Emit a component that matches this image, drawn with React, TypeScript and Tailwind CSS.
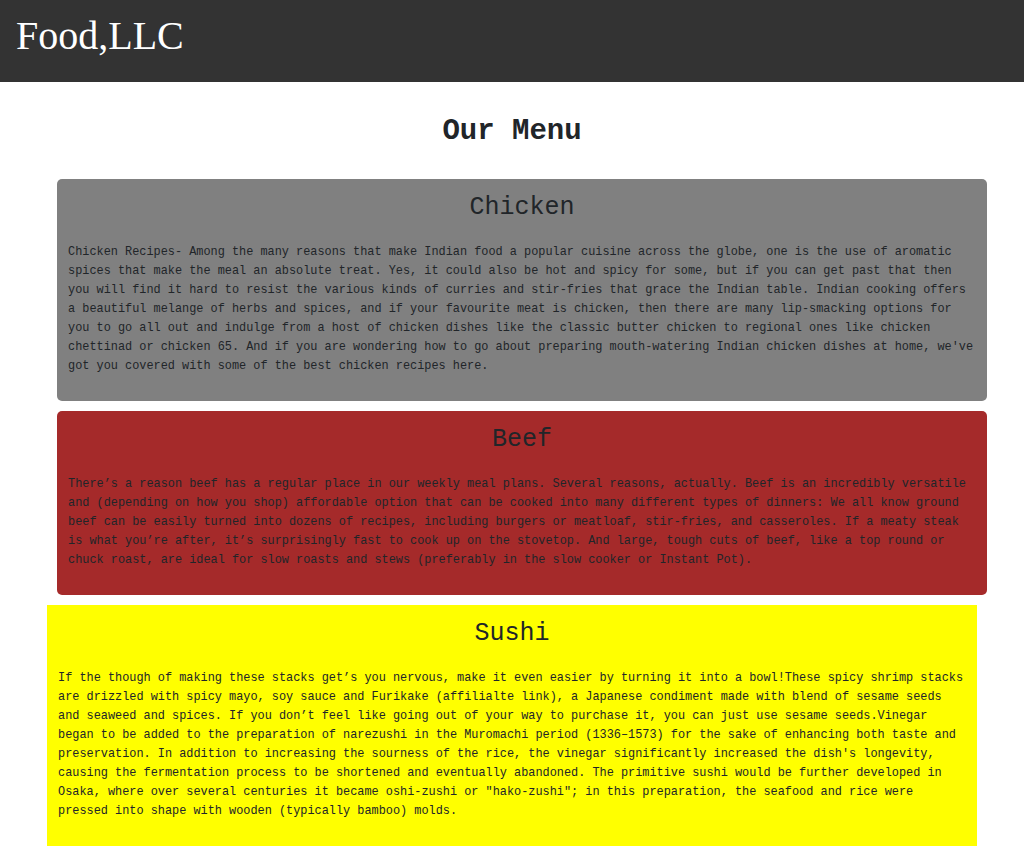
import React from "react";

const mono = { fontFamily: '"Liberation Mono", "DejaVu Sans Mono", monospace' };

const chicken = [
  "Chicken Recipes- Among the many reasons that make Indian food a popular cuisine across the globe, one is the use of aromatic",
  "spices that make the meal an absolute treat. Yes, it could also be hot and spicy for some, but if you can get past that then",
  "you will find it hard to resist the various kinds of curries and stir-fries that grace the Indian table. Indian cooking offers",
  "a beautiful melange of herbs and spices, and if your favourite meat is chicken, then there are many lip-smacking options for",
  "you to go all out and indulge from a host of chicken dishes like the classic butter chicken to regional ones like chicken",
  "chettinad or chicken 65. And if you are wondering how to go about preparing mouth-watering Indian chicken dishes at home, we've",
  "got you covered with some of the best chicken recipes here.",
];

const beef = [
  "There’s a reason beef has a regular place in our weekly meal plans. Several reasons, actually. Beef is an incredibly versatile",
  "and (depending on how you shop) affordable option that can be cooked into many different types of dinners: We all know ground",
  "beef can be easily turned into dozens of recipes, including burgers or meatloaf, stir-fries, and casseroles. If a meaty steak",
  "is what you’re after, it’s surprisingly fast to cook up on the stovetop. And large, tough cuts of beef, like a top round or",
  "chuck roast, are ideal for slow roasts and stews (preferably in the slow cooker or Instant Pot).",
];

const sushi = [
  "If the though of making these stacks get’s you nervous, make it even easier by turning it into a bowl!These spicy shrimp stacks",
  "are drizzled with spicy mayo, soy sauce and Furikake (affilialte link), a Japanese condiment made with blend of sesame seeds",
  "and seaweed and spices. If you don’t feel like going out of your way to purchase it, you can just use sesame seeds.Vinegar",
  "began to be added to the preparation of narezushi in the Muromachi period (1336–1573) for the sake of enhancing both taste and",
  "preservation. In addition to increasing the sourness of the rice, the vinegar significantly increased the dish's longevity,",
  "causing the fermentation process to be shortened and eventually abandoned. The primitive sushi would be further developed in",
  "Osaka, where over several centuries it became oshi-zushi or \"hako-zushi\"; in this preparation, the seafood and rice were",
  "pressed into shape with wooden (typically bamboo) molds.",
];

function Card({ title, lines, className }: { title: string; lines: string[]; className: string }) {
  return (
    <section className={`w-[930px] pt-[14px] pb-[25px] px-[11px] text-[#212529] ${className}`} style={mono}>
      <h2 className="text-center text-[25px] leading-[30px] font-normal">{title}</h2>
      <p className="mt-[20px] text-[11.88px] leading-[19px] whitespace-nowrap">
        {lines.map((l, i) => (
          <React.Fragment key={i}>
            {l}
            {i < lines.length - 1 && <br />}
          </React.Fragment>
        ))}
      </p>
    </section>
  );
}

export default function App() {
  return (
    <div className="w-[1024px] h-[846px] overflow-hidden bg-white">
      <header className="h-[82px] bg-[#333333] pl-[16px] pt-[13px]">
        <h1
          className="text-white text-[40px] leading-[46px] font-normal"
          style={{ fontFamily: '"Liberation Serif", "Times New Roman", serif' }}
        >
          Food,LLC
        </h1>
      </header>
      <main className="flex flex-col">
        <h1
          className="mt-[32px] text-center text-[29px] leading-[35px] font-bold text-[#212529]"
          style={mono}
        >
          Our Menu
        </h1>
        <div className="mt-[30px] flex flex-col gap-[10px]">
          <div className="pl-[57px]">
            <Card title="Chicken" lines={chicken} className="bg-[#808080] rounded-[5px]" />
          </div>
          <div className="pl-[57px]">
            <Card title="Beef" lines={beef} className="bg-[#a52a2a] rounded-[5px]" />
          </div>
          <div className="pl-[47px]">
            <Card title="Sushi" lines={sushi} className="bg-[#ffff00]" />
          </div>
        </div>
      </main>
    </div>
  );
}
